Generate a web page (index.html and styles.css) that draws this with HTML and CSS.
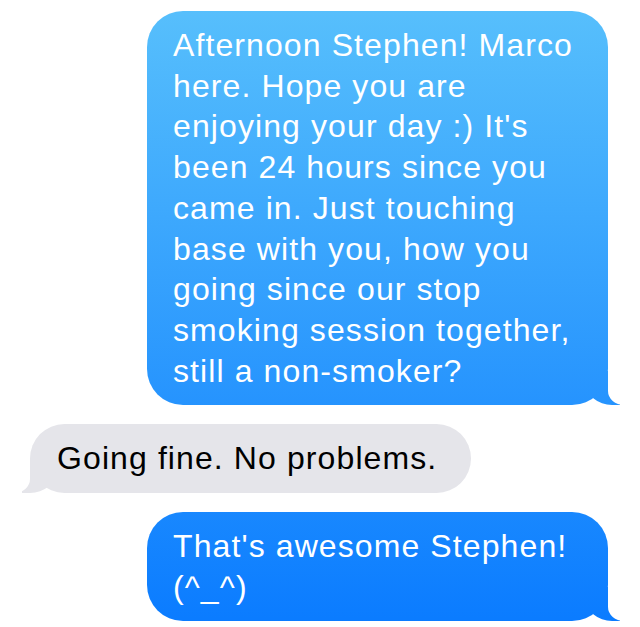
FILE: index.html
```html
<!DOCTYPE html>
<html lang="en">
<head>
    <meta charset="UTF-8">
    <meta name="viewport" content="width=device-width, initial-scale=1.0">
    <title>Messages</title>
    <link rel="stylesheet" href="styles.css">
</head>
<body>

<div class="thread">
    <!-- Sent -->
    <div class="bubble sent">
        Afternoon Stephen! Marco here. Hope you are enjoying your day :) It's been 24 hours since you came in. Just touching base with you, how you going since our stop smoking session together, still a non-smoker?
    </div>

    <!-- Received -->
    <div class="bubble received">
        Going fine. No problems.
    </div>

    <!-- Sent -->
    <div class="bubble sent">
        That's awesome Stephen! (^_^)
    </div>
</div>

</body>
</html>
```

FILE: styles.css
```css
body {
    font-family: "Liberation Sans", Arial, sans-serif;
    background-color: #fff;
    margin: 0;
    padding: 0;
}
.thread {
    display: flex;
    flex-direction: column;
    gap: 19px;
    padding: 11px 32px 0 30px;
}
.bubble {
    position: relative;
    max-width: 405px;
    padding: 14px 30px 14px 26px;
    border-radius: 36px;
    font-size: 32px;
    letter-spacing: 1.1px;
    line-height: 40.7px;
}
.sent {
    align-self: flex-end;
    color: white;
    background: linear-gradient(to bottom, #58c0fc 0px, #0a7bff 627px) fixed;
}
.received {
    align-self: flex-start;
    color: #000;
    background-color: #e5e5ea;
    padding-left: 27px;
    padding-right: 34px;
}

/* tails */
.bubble::before,
.bubble::after {
    content: "";
    position: absolute;
    bottom: 0;
    height: 34px;
}
.sent::before {
    right: -12px;
    width: 34px;
    background: inherit;
    border-bottom-left-radius: 26px 22px;
}
.sent::after {
    right: -40px;
    width: 40px;
    background-color: white;
    border-bottom-left-radius: 16px 14px;
}
.received::before {
    left: -8px;
    width: 34px;
    background-color: #e5e5ea;
    border-bottom-right-radius: 26px 22px;
}
.received::after {
    left: -40px;
    width: 40px;
    background-color: white;
    border-bottom-right-radius: 16px 14px;
}
```
